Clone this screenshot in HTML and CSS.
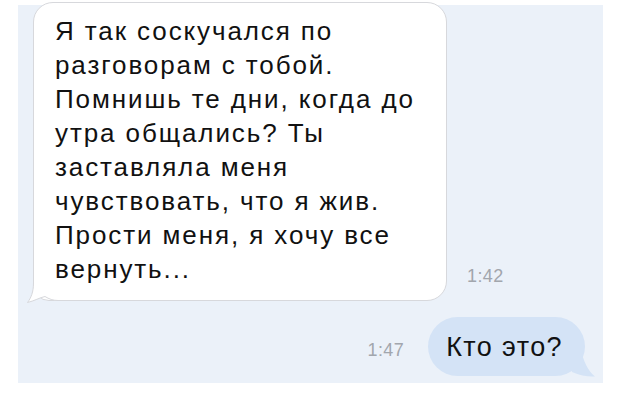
FILE: index.html
```html
<!DOCTYPE html>
<html lang="ru">
<head>
<meta charset="utf-8">
<title>Сообщения</title>
<link rel="stylesheet" href="styles.css">
</head>
<body>
<div class="panel">
  <div class="row row-in">
    <div class="bubble bubble-in">
      <p class="msg msg-in">Я так соскучался по<br>разговорам с тобой.<br>Помнишь те дни, когда до<br>утра общались? Ты<br>заставляла меня<br>чувствовать, что я жив.<br>Прости меня, я хочу все<br>вернуть...</p>
      <svg class="tail tail-in" width="34" height="22" viewBox="0 0 34 22">
        <path d="M7.5 1 C7.5 10 5 16 1.5 20.5 C8 19 14 15.5 19 14.5 C23 17 27 18.5 32 18.5 L32 1 Z" fill="#ffffff"/>
        <path d="M7.5 1 C7.5 10 5 16 1.5 20.5 C8 19 14 15.5 19 14.5 C23 17 27 18.5 32 18.5" fill="none" stroke="#d7d8dc" stroke-width="1"/>
      </svg>
    </div>
    <span class="time time-in">1:42</span>
  </div>
  <div class="row row-out">
    <span class="time time-out">1:47</span>
    <div class="bubble bubble-out">
      <p class="msg msg-out">Кто это?</p>
      <svg class="tail tail-out" width="32" height="33" viewBox="0 0 32 33">
        <path d="M15 3 C19 17 23 26 30 31.5 C23 32 15 30.5 7 27 L5 3 Z" fill="#d4e3f6"/>
      </svg>
    </div>
  </div>
</div>
</body>
</html>
```
FILE: styles.css
```css
html, body {
  margin: 0;
  padding: 0;
  background: #ffffff;
}

body {
  font-family: "Liberation Sans", Arial, Helvetica, sans-serif;
  color: #111111;
}

.panel {
  width: 585px;
  height: 378px;
  margin: 5px 0 0 18px;
  background: #ebf1f9;
  display: flex;
  flex-direction: column;
  box-sizing: border-box;
}

.row {
  display: flex;
  align-items: flex-end;
}

.row-in {
  margin-top: -3px;
}

.row-out {
  justify-content: flex-end;
  margin-top: 16px;
  padding-right: 18px;
}

.bubble {
  position: relative;
  box-sizing: border-box;
}

.bubble-in {
  width: 414px;
  margin-left: 15px;
  padding: 11px 8px 14px 21px;
  background: #ffffff;
  border: 1px solid #d7d8dc;
  border-radius: 20px 20px 20px 16px;
}

.msg {
  margin: 0;
  white-space: nowrap;
}

.msg-in {
  font-size: 26px;
  line-height: 34px;
  letter-spacing: 1.9px;
}

.bubble-out {
  height: 59px;
  padding: 0 22px 0 18px;
  background: #d4e3f6;
  border-radius: 30px;
  display: flex;
  align-items: center;
}

.msg-out {
  font-size: 27px;
  line-height: 30px;
  letter-spacing: 1.4px;
}

.tail {
  position: absolute;
  display: block;
}

.tail-in {
  left: -8px;
  bottom: -4px;
}

.tail-out {
  right: -12px;
  bottom: -2px;
}

.time {
  font-size: 18px;
  line-height: 20px;
  letter-spacing: 0.4px;
  color: #a2a6ad;
}

.time-in {
  margin-left: 20px;
  margin-bottom: 15px;
}

.time-out {
  margin-right: 24px;
  margin-bottom: 16px;
}
```
